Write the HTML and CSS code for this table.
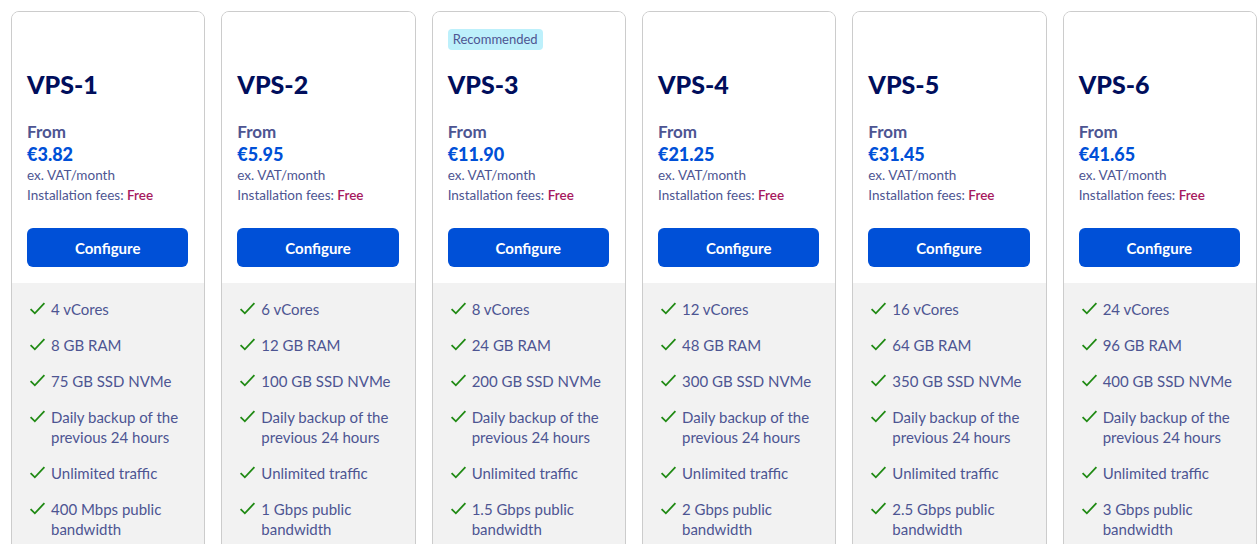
FILE: index.html
```html
<!DOCTYPE html>
<html>
<head>
<meta charset="utf-8">
<link rel="stylesheet" href="styles.css">
</head>
<body>
<div class="plans">
  <div class="card">
    <div class="top">
      <div class="badge-row"></div>
      <h2 class="name">VPS-1</h2>
      <div class="from">From</div>
      <div class="price">€3.82</div>
      <div class="note">ex. VAT/month</div>
      <div class="note">Installation fees: <span class="free">Free</span></div>
      <a class="btn">Configure</a>
    </div>
    <ul class="features">
      <li><svg class="chk" viewBox="0 0 16 16"><path d="M1.5 8.5l4 4 9-9.5"/></svg><span>4 vCores</span></li>
      <li><svg class="chk" viewBox="0 0 16 16"><path d="M1.5 8.5l4 4 9-9.5"/></svg><span>8 GB RAM</span></li>
      <li><svg class="chk" viewBox="0 0 16 16"><path d="M1.5 8.5l4 4 9-9.5"/></svg><span>75 GB SSD NVMe</span></li>
      <li><svg class="chk" viewBox="0 0 16 16"><path d="M1.5 8.5l4 4 9-9.5"/></svg><span>Daily backup of the previous 24 hours</span></li>
      <li><svg class="chk" viewBox="0 0 16 16"><path d="M1.5 8.5l4 4 9-9.5"/></svg><span>Unlimited traffic</span></li>
      <li><svg class="chk" viewBox="0 0 16 16"><path d="M1.5 8.5l4 4 9-9.5"/></svg><span>400 Mbps public bandwidth</span></li>
    </ul>
  </div>
  <div class="card">
    <div class="top">
      <div class="badge-row"></div>
      <h2 class="name">VPS-2</h2>
      <div class="from">From</div>
      <div class="price">€5.95</div>
      <div class="note">ex. VAT/month</div>
      <div class="note">Installation fees: <span class="free">Free</span></div>
      <a class="btn">Configure</a>
    </div>
    <ul class="features">
      <li><svg class="chk" viewBox="0 0 16 16"><path d="M1.5 8.5l4 4 9-9.5"/></svg><span>6 vCores</span></li>
      <li><svg class="chk" viewBox="0 0 16 16"><path d="M1.5 8.5l4 4 9-9.5"/></svg><span>12 GB RAM</span></li>
      <li><svg class="chk" viewBox="0 0 16 16"><path d="M1.5 8.5l4 4 9-9.5"/></svg><span>100 GB SSD NVMe</span></li>
      <li><svg class="chk" viewBox="0 0 16 16"><path d="M1.5 8.5l4 4 9-9.5"/></svg><span>Daily backup of the previous 24 hours</span></li>
      <li><svg class="chk" viewBox="0 0 16 16"><path d="M1.5 8.5l4 4 9-9.5"/></svg><span>Unlimited traffic</span></li>
      <li><svg class="chk" viewBox="0 0 16 16"><path d="M1.5 8.5l4 4 9-9.5"/></svg><span>1 Gbps public bandwidth</span></li>
    </ul>
  </div>
  <div class="card">
    <div class="top">
      <div class="badge-row"><span class="badge">Recommended</span></div>
      <h2 class="name">VPS-3</h2>
      <div class="from">From</div>
      <div class="price">€11.90</div>
      <div class="note">ex. VAT/month</div>
      <div class="note">Installation fees: <span class="free">Free</span></div>
      <a class="btn">Configure</a>
    </div>
    <ul class="features">
      <li><svg class="chk" viewBox="0 0 16 16"><path d="M1.5 8.5l4 4 9-9.5"/></svg><span>8 vCores</span></li>
      <li><svg class="chk" viewBox="0 0 16 16"><path d="M1.5 8.5l4 4 9-9.5"/></svg><span>24 GB RAM</span></li>
      <li><svg class="chk" viewBox="0 0 16 16"><path d="M1.5 8.5l4 4 9-9.5"/></svg><span>200 GB SSD NVMe</span></li>
      <li><svg class="chk" viewBox="0 0 16 16"><path d="M1.5 8.5l4 4 9-9.5"/></svg><span>Daily backup of the previous 24 hours</span></li>
      <li><svg class="chk" viewBox="0 0 16 16"><path d="M1.5 8.5l4 4 9-9.5"/></svg><span>Unlimited traffic</span></li>
      <li><svg class="chk" viewBox="0 0 16 16"><path d="M1.5 8.5l4 4 9-9.5"/></svg><span>1.5 Gbps public bandwidth</span></li>
    </ul>
  </div>
  <div class="card">
    <div class="top">
      <div class="badge-row"></div>
      <h2 class="name">VPS-4</h2>
      <div class="from">From</div>
      <div class="price">€21.25</div>
      <div class="note">ex. VAT/month</div>
      <div class="note">Installation fees: <span class="free">Free</span></div>
      <a class="btn">Configure</a>
    </div>
    <ul class="features">
      <li><svg class="chk" viewBox="0 0 16 16"><path d="M1.5 8.5l4 4 9-9.5"/></svg><span>12 vCores</span></li>
      <li><svg class="chk" viewBox="0 0 16 16"><path d="M1.5 8.5l4 4 9-9.5"/></svg><span>48 GB RAM</span></li>
      <li><svg class="chk" viewBox="0 0 16 16"><path d="M1.5 8.5l4 4 9-9.5"/></svg><span>300 GB SSD NVMe</span></li>
      <li><svg class="chk" viewBox="0 0 16 16"><path d="M1.5 8.5l4 4 9-9.5"/></svg><span>Daily backup of the previous 24 hours</span></li>
      <li><svg class="chk" viewBox="0 0 16 16"><path d="M1.5 8.5l4 4 9-9.5"/></svg><span>Unlimited traffic</span></li>
      <li><svg class="chk" viewBox="0 0 16 16"><path d="M1.5 8.5l4 4 9-9.5"/></svg><span>2 Gbps public bandwidth</span></li>
    </ul>
  </div>
  <div class="card">
    <div class="top">
      <div class="badge-row"></div>
      <h2 class="name">VPS-5</h2>
      <div class="from">From</div>
      <div class="price">€31.45</div>
      <div class="note">ex. VAT/month</div>
      <div class="note">Installation fees: <span class="free">Free</span></div>
      <a class="btn">Configure</a>
    </div>
    <ul class="features">
      <li><svg class="chk" viewBox="0 0 16 16"><path d="M1.5 8.5l4 4 9-9.5"/></svg><span>16 vCores</span></li>
      <li><svg class="chk" viewBox="0 0 16 16"><path d="M1.5 8.5l4 4 9-9.5"/></svg><span>64 GB RAM</span></li>
      <li><svg class="chk" viewBox="0 0 16 16"><path d="M1.5 8.5l4 4 9-9.5"/></svg><span>350 GB SSD NVMe</span></li>
      <li><svg class="chk" viewBox="0 0 16 16"><path d="M1.5 8.5l4 4 9-9.5"/></svg><span>Daily backup of the previous 24 hours</span></li>
      <li><svg class="chk" viewBox="0 0 16 16"><path d="M1.5 8.5l4 4 9-9.5"/></svg><span>Unlimited traffic</span></li>
      <li><svg class="chk" viewBox="0 0 16 16"><path d="M1.5 8.5l4 4 9-9.5"/></svg><span>2.5 Gbps public bandwidth</span></li>
    </ul>
  </div>
  <div class="card">
    <div class="top">
      <div class="badge-row"></div>
      <h2 class="name">VPS-6</h2>
      <div class="from">From</div>
      <div class="price">€41.65</div>
      <div class="note">ex. VAT/month</div>
      <div class="note">Installation fees: <span class="free">Free</span></div>
      <a class="btn">Configure</a>
    </div>
    <ul class="features">
      <li><svg class="chk" viewBox="0 0 16 16"><path d="M1.5 8.5l4 4 9-9.5"/></svg><span>24 vCores</span></li>
      <li><svg class="chk" viewBox="0 0 16 16"><path d="M1.5 8.5l4 4 9-9.5"/></svg><span>96 GB RAM</span></li>
      <li><svg class="chk" viewBox="0 0 16 16"><path d="M1.5 8.5l4 4 9-9.5"/></svg><span>400 GB SSD NVMe</span></li>
      <li><svg class="chk" viewBox="0 0 16 16"><path d="M1.5 8.5l4 4 9-9.5"/></svg><span>Daily backup of the previous 24 hours</span></li>
      <li><svg class="chk" viewBox="0 0 16 16"><path d="M1.5 8.5l4 4 9-9.5"/></svg><span>Unlimited traffic</span></li>
      <li><svg class="chk" viewBox="0 0 16 16"><path d="M1.5 8.5l4 4 9-9.5"/></svg><span>3 Gbps public bandwidth</span></li>
    </ul>
  </div>
</div>
</body>
</html>
```

FILE: styles.css
```css
* { box-sizing: border-box; }
html, body { margin: 0; padding: 0; background: #fff; }
body {
  font-family: "Lato", "Open Sans", sans-serif;
  color: #4d5592;
  overflow: hidden;
  height: 544px;
}
.plans {
  display: grid;
  grid-template-columns: repeat(6, 1fr);
  gap: 16px;
  padding: 11px 3px 0 11px;
}
.card {
  border: 1px solid #cccccc;
  border-radius: 8px;
  overflow: hidden;
  height: 560px;
  display: flex;
  flex-direction: column;
}
.top {
  padding: 17px 16px 16px 15px;
  display: flex;
  flex-direction: column;
  background: #fff;
}
.badge-row {
  height: 21px;
  display: flex;
  align-items: center;
}
.badge {
  background: #bdf0fb;
  color: #4d5592;
  font-size: 13px;
  border-radius: 4px;
  padding: 2px 5px;
  line-height: 17px;
}
.name {
  margin: 18px 0 0 0;
  font-size: 25px;
  font-weight: 900;
  color: #000e5c;
  line-height: 32px;
}
.from {
  margin-top: 21px;
  font-size: 17px;
  font-weight: 700;
  line-height: 22px;
  color: #4d5592;
}
.price {
  font-size: 18px;
  font-weight: 900;
  color: #0050d7;
  line-height: 22px;
}
.note {
  font-size: 13.5px;
  line-height: 20px;
  color: #4d5592;
}
.free {
  color: #a6185e;
  font-weight: 600;
}
.btn {
  margin-top: 23px;
  height: 39px;
  border-radius: 6px;
  background: #0050d7;
  color: #fff;
  font-weight: 700;
  font-size: 15px;
  display: flex;
  align-items: center;
  justify-content: center;
}
.features {
  list-style: none;
  margin: 0;
  padding: 16px 12px 0 15px;
  background: #f2f2f2;
  flex: 1;
  display: flex;
  flex-direction: column;
  gap: 16px;
}
.features li {
  display: flex;
  align-items: flex-start;
  gap: 5px;
  font-size: 15px;
  line-height: 20px;
  color: #4d5592;
}
.chk {
  width: 17px;
  height: 17px;
  flex: none;
  margin-top: 1px;
  margin-left: 2px;
  fill: none;
  stroke: #208a14;
  stroke-width: 1.7;
}
```
